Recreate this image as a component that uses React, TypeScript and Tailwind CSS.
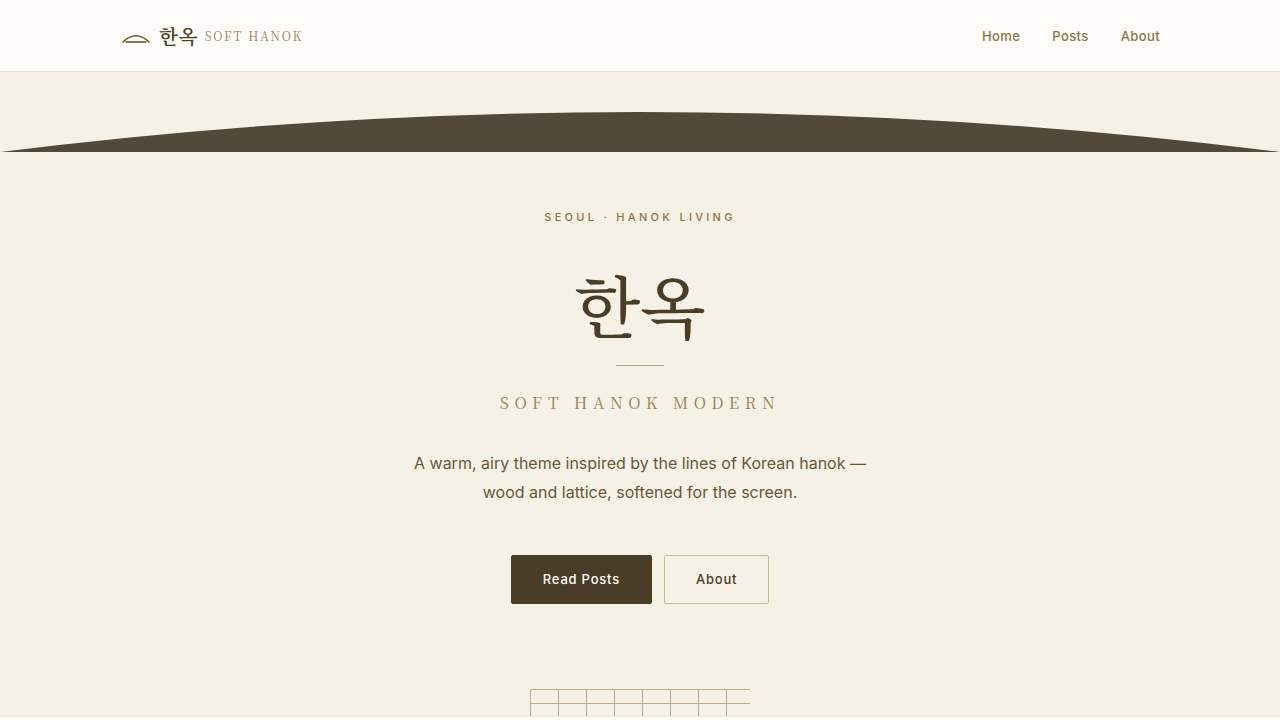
const NAV_LINKS = [
  { label: "Home", href: "#home" },
  { label: "Posts", href: "#posts" },
  { label: "About", href: "#about" },
];

const LATTICE_COLUMNS = [0, 28, 56, 84, 112, 140, 168, 196];
const LATTICE_ROWS = [0, 14];

function LogoMark() {
  return (
    <svg className="h-5 w-8" viewBox="0 0 32 20" fill="none" aria-hidden="true">
      <path d="M2.5 16.5 Q16 3 29.5 16.5" stroke="#6b5a3a" strokeWidth="1.5" />
      <path d="M5.5 16 H26.5" stroke="#8b7850" strokeWidth="2" />
    </svg>
  );
}

function Roof() {
  return (
    <svg
      className="block h-10 w-full"
      viewBox="0 0 1280 40"
      preserveAspectRatio="none"
      aria-hidden="true"
    >
      <path d="M0 40 Q640 -40 1280 40 Z" fill="#534938" />
    </svg>
  );
}

function Lattice() {
  return (
    <svg
      className="mx-auto block h-[27px] w-[220px]"
      viewBox="0 0 220 27"
      fill="#bcad92"
      aria-hidden="true"
    >
      {LATTICE_COLUMNS.map((x) => (
        <rect key={x} x={x} y="0" width="1" height="27" />
      ))}
      {LATTICE_ROWS.map((y) => (
        <rect key={y} x="0" y={y} width="220" height="1" />
      ))}
    </svg>
  );
}

export default function App() {
  return (
    <div className="min-h-screen bg-[#fdfcf8] font-['Inter','Noto_Sans_CJK_KR',sans-serif] text-[#4a3d28]">
      <header className="border-b border-[#ede5d0] bg-[#fdfcf8]">
        <div className="mx-auto flex h-[71px] max-w-[1120px] items-center justify-between px-10">
          <a href="#home" className="flex items-center gap-[7px] font-['Noto_Serif_KR','Noto_Serif_CJK_KR',serif]">
            <LogoMark />
            <span className="text-xl font-semibold">한옥</span>
            <span className="text-xs leading-[18px] tracking-[0.15em] text-[#9a8560]">SOFT HANOK</span>
          </a>
          <nav className="flex items-center gap-8">
            {NAV_LINKS.map((link) => (
              <a
                key={link.label}
                href={link.href}
                className="text-[13px] leading-[22px] font-medium tracking-[0.03em] text-[#8b7548]"
              >
                {link.label}
              </a>
            ))}
          </nav>
        </div>
      </header>

      <section className="border-b border-[#ede5d0] bg-[#f6f1e6] pt-10">
        <Roof />
        <div className="flex flex-col items-center px-10 pt-14 text-center">
          <p className="text-[11px] leading-[18px] font-medium tracking-[0.3em] text-[#8b7548]">
            SEOUL · HANOK LIVING
          </p>
          <h1 className="mt-[42px] font-['Noto_Serif_KR','Noto_Serif_CJK_KR',serif] text-[68px] leading-[72px] font-medium">
            한옥
          </h1>
          <div className="mt-[25px] h-px w-12 bg-[#b0a080]" />
          <p className="mt-[23px] font-['Noto_Serif_KR','Noto_Serif_CJK_KR',serif] text-base leading-7 tracking-[0.35em] text-[#9a8055]">
            SOFT HANOK MODERN
          </p>
          <p className="mt-8 max-w-[480px] text-base leading-[29px] text-[#6b5635]">
            A warm, airy theme inspired by the lines of Korean hanok — wood and lattice, softened for the screen.
          </p>
          <div className="mt-12 flex gap-3">
            <a
              href="#posts"
              className="rounded-xs border border-[#4a3d28] bg-[#4a3d28] px-[31px] py-3 text-[13px] leading-[23px] font-medium tracking-[0.06em] text-[#fdfcf8]"
            >
              Read Posts
            </a>
            <a
              href="#about"
              className="rounded-xs border border-[#c8b88a] px-[31px] py-3 text-[13px] leading-[23px] font-medium tracking-[0.06em]"
            >
              About
            </a>
          </div>
        </div>
        <div className="mt-[85px]">
          <Lattice />
        </div>
      </section>
    </div>
  );
}
